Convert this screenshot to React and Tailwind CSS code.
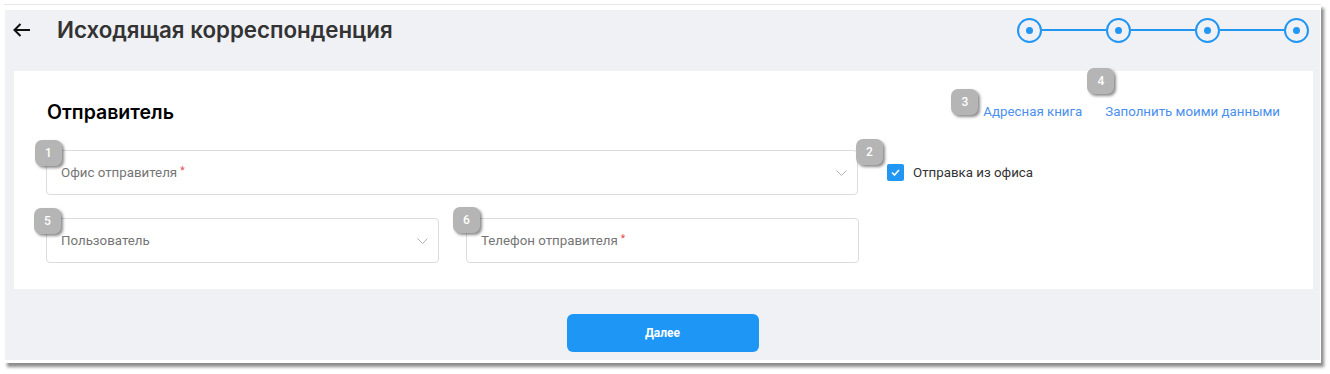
import React from 'react';

// numbered help marker that sits over a field
function Badge({ n, className }) {
  return (
    <div
      className={
        'absolute w-[27px] h-[26px] rounded-[7px] bg-[#b5b5b5] text-white text-[12px] font-medium flex items-center justify-center shadow-[2px_2px_3px_rgba(0,0,0,0.45)] ' +
        className
      }
    >
      {n}
    </div>
  );
}

function Chevron() {
  return (
    <svg width="11" height="6" viewBox="0 0 11 6" className="shrink-0">
      <path d="M0.5 0.5 L5.5 5.5 L10.5 0.5" fill="none" stroke="#b0b0b0" strokeWidth="1" />
    </svg>
  );
}

function Field({ label, required, select, className, badge, badgeClass }) {
  return (
    <div
      className={
        'relative h-[45px] border border-[#dcdcdc] rounded-[4px] bg-white flex items-center pl-[14px] pr-[10px] ' +
        className
      }
    >
      <span className="text-[13.3px] text-[#757575] flex-1">
        {label}
        {required && <span className="text-[#e04848] text-[10px] align-top ml-[3px]">*</span>}
      </span>
      {select && <Chevron />}
      <Badge n={badge} className={badgeClass} />
    </div>
  );
}

function Stepper() {
  const steps = [0, 1, 2, 3];
  return (
    <div className="flex items-center">
      {steps.map((s) => (
        <React.Fragment key={s}>
          {s > 0 && <div className="w-[64px] h-[2px] bg-[#2196f3]" />}
          <div className="w-[25px] h-[25px] rounded-full border-2 border-[#2196f3] flex items-center justify-center">
            <div className="w-[7px] h-[7px] rounded-full bg-[#2196f3]" />
          </div>
        </React.Fragment>
      ))}
    </div>
  );
}

export default function App() {
  return (
    <div className="w-[1330px] h-[374px] bg-white font-['Roboto',sans-serif] overflow-hidden">
      <div className="ml-[4px] mt-[4px] w-[1317px] h-[359px] bg-white border-t border-[#e6e6e6] pt-[5px] pl-[1px] pr-[1px] pb-[3px] shadow-[3px_4px_3px_rgba(0,0,0,0.45)]">
        <div className="h-full bg-[#f0f1f5] flex flex-col">
          {/* header */}
          <div className="h-[40px] flex items-center pr-[11px]">
            <svg width="18" height="14" viewBox="0 0 18 14" className="ml-[8px]">
              <path d="M17 7 H1.5 M7.5 1 L1.5 7 L7.5 13" fill="none" stroke="#111" strokeWidth="2" />
            </svg>
            <h1 className="ml-[26px] text-[22.3px] font-semibold text-[#333] font-['Inter',sans-serif] flex-1">
              Исходящая корреспонденция
            </h1>
            <Stepper />
          </div>

          {/* sender card */}
          <div className="mt-[21px] ml-[9px] mr-[7px] bg-white pl-[32px] pr-[33px] pt-[30px] pb-[26px]">
            <div className="flex items-center justify-between h-[24px]">
              <h2 className="text-[19.5px] font-semibold text-black font-['Inter',sans-serif] ml-[1px]">Отправитель</h2>
              <div className="flex items-center gap-[23px] text-[13.3px] text-[#4a8fee] mt-[-3px]">
                <span className="relative">
                  Адресная книга
                  <Badge n="3" className="left-[-32px] top-[-13px]" />
                </span>
                <span className="relative">
                  Заполнить моими данными
                  <Badge n="4" className="left-[-18px] top-[-34px]" />
                </span>
              </div>
            </div>

            <div className="mt-[25px] flex items-center">
              <Field
                label="Офис отправителя"
                required
                select
                className="w-[812px] h-[44px]"
                badge="1"
                badgeClass="left-[-12px] top-[-11px]"
              />
              <label className="relative ml-[29px] flex items-center gap-[9px] text-[13.3px] text-[#333]">
                <span className="w-[17px] h-[17px] rounded-[2px] bg-[#2196f3] flex items-center justify-center">
                  <svg width="9" height="7" viewBox="0 0 9 7">
                    <path d="M1 3.5 L3.5 6 L8 1" fill="none" stroke="#fff" strokeWidth="1.6" />
                  </svg>
                </span>
                Отправка из офиса
                <Badge n="2" className="left-[-31px] top-[-24px]" />
              </label>
            </div>

            <div className="mt-[23px] flex gap-[27px]">
              <Field
                label="Пользователь"
                select
                className="w-[393px]"
                badge="5"
                badgeClass="left-[-13px] top-[-11px]"
              />
              <Field
                label="Телефон отправителя"
                required
                className="w-[393px]"
                badge="6"
                badgeClass="left-[-14px] top-[-12px]"
              />
            </div>
          </div>

          {/* footer */}
          <div className="mt-[25px] flex justify-center">
            <button className="w-[192px] h-[38px] rounded-[6px] bg-[#1e96f5] text-white text-[12px] font-bold">
              Далее
            </button>
          </div>
        </div>
      </div>
    </div>
  );
}
